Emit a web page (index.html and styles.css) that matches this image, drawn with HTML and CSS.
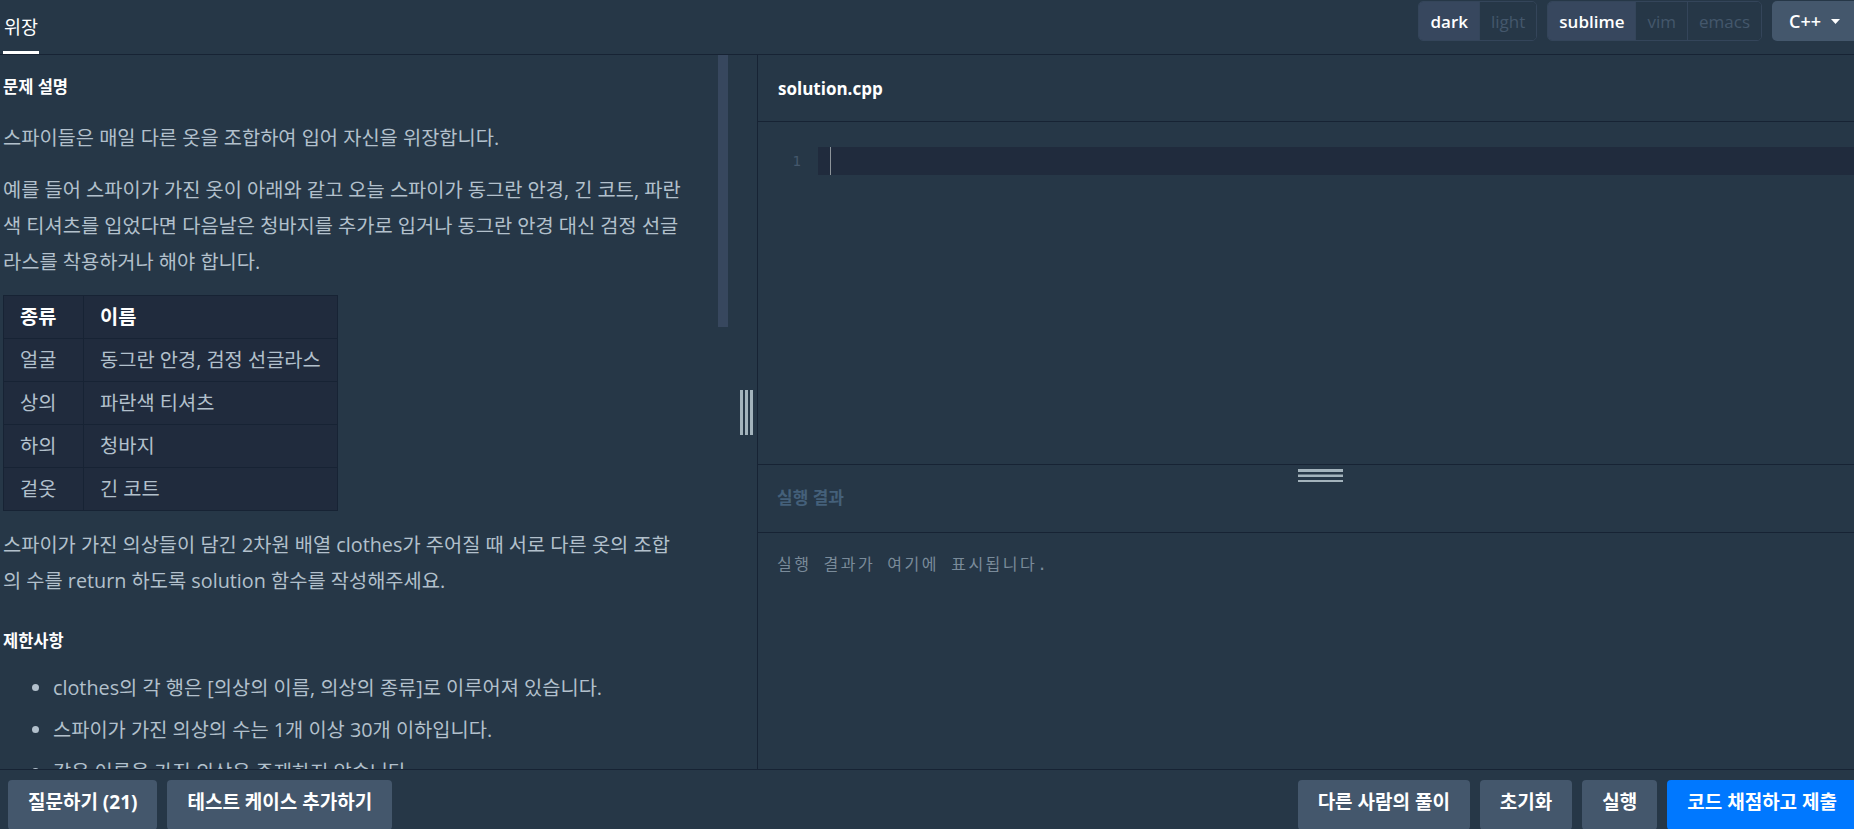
FILE: index.html
```html
<!DOCTYPE html>
<html lang="ko">
<head>
<meta charset="utf-8">
<title>위장</title>
<link rel="stylesheet" href="styles.css">
</head>
<body>
<div class="app">
  <header class="topbar">
    <nav class="tabs">
      <div class="tab">위장</div>
    </nav>
    <div class="toolbar">
      <div class="toggle-group">
        <span class="toggle on">dark</span>
        <span class="toggle">light</span>
      </div>
      <div class="toggle-group">
        <span class="toggle on">sublime</span>
        <span class="toggle">vim</span>
        <span class="toggle">emacs</span>
      </div>
      <div class="lang-btn">
        <span>C++</span>
        <svg class="caret" width="9" height="5" viewBox="0 0 9 5"><polygon points="0,0 9,0 4.5,5" fill="#ffffff"/></svg>
      </div>
    </div>
  </header>

  <main class="workspace">
    <section class="problem">
      <div class="problem-body">
        <h5 class="section-title">문제 설명</h5>
        <p>스파이들은 매일 다른 옷을 조합하여 입어 자신을 위장합니다.</p>
        <p class="before-table">예를 들어 스파이가 가진 옷이 아래와 같고 오늘 스파이가 동그란 안경, 긴 코트, 파란색 티셔츠를 입었다면 다음날은 청바지를 추가로 입거나 동그란 안경 대신 검정 선글라스를 착용하거나 해야 합니다.</p>
        <table class="info-table">
          <thead>
            <tr><th class="kind">종류</th><th>이름</th></tr>
          </thead>
          <tbody>
            <tr><td>얼굴</td><td>동그란 안경, 검정 선글라스</td></tr>
            <tr><td>상의</td><td>파란색 티셔츠</td></tr>
            <tr><td>하의</td><td>청바지</td></tr>
            <tr><td>겉옷</td><td>긴 코트</td></tr>
          </tbody>
        </table>
        <p>스파이가 가진 의상들이 담긴 2차원 배열 clothes가 주어질 때 서로 다른 옷의 조합의 수를 return 하도록 solution 함수를 작성해주세요.</p>
        <h5 class="section-title constraints">제한사항</h5>
        <ul class="rules">
          <li>clothes의 각 행은 [의상의 이름, 의상의 종류]로 이루어져 있습니다.</li>
          <li>스파이가 가진 의상의 수는 1개 이상 30개 이하입니다.</li>
          <li>같은 이름을 가진 의상은 존재하지 않습니다.</li>
          <li>clothes의 모든 원소는 문자열로 이루어져 있습니다.</li>
        </ul>
      </div>
      <div class="scroll-track"><div class="scroll-thumb"></div></div>
    </section>

    <div class="v-gutter">
      <svg width="13" height="45" viewBox="0 0 13 45">
        <rect x="0" y="0" width="3" height="45" fill="#a3b3bc"/>
        <rect x="5" y="0" width="3" height="45" fill="#a3b3bc"/>
        <rect x="10" y="0" width="3" height="45" fill="#a3b3bc"/>
      </svg>
    </div>

    <section class="ide">
      <div class="file-header">solution.cpp</div>
      <div class="editor">
        <div class="gutter"><div class="line-no">1</div></div>
        <div class="code">
          <div class="active-line"><span class="cursor"></span></div>
        </div>
      </div>
      <div class="output-pane">
        <svg class="h-handle" width="45" height="13" viewBox="0 0 45 13">
          <rect x="0" y="0" width="45" height="3" fill="#a3b3bc"/>
          <rect x="0" y="5.5" width="45" height="2.5" fill="#a3b3bc"/>
          <rect x="0" y="11" width="45" height="2" fill="#a3b3bc"/>
        </svg>
        <div class="output-header">실행 결과</div>
        <div class="output-body">실행 결과가 여기에 표시됩니다.</div>
      </div>
    </section>
  </main>

  <footer class="bottombar">
    <div class="btn-group">
      <span class="btn">질문하기 (21)</span>
      <span class="btn">테스트 케이스 추가하기</span>
    </div>
    <div class="btn-group">
      <span class="btn">다른 사람의 풀이</span>
      <span class="btn">초기화</span>
      <span class="btn">실행</span>
      <span class="btn primary">코드 채점하고 제출</span>
    </div>
  </footer>
</div>
</body>
</html>
```

FILE: styles.css
```css
* {
  box-sizing: border-box;
}

html,
body {
  margin: 0;
  height: 100%;
  overflow: hidden;
  background: #263747;
}

body {
  font-family: "Open Sans", "Noto Sans CJK KR", sans-serif;
  color: #b2c0cc;
}

.app {
  width: 1881px;
  height: 100vh;
  display: flex;
  flex-direction: column;
}

/* ---------- top bar ---------- */
.topbar {
  flex: none;
  height: 55px;
  display: flex;
  justify-content: space-between;
  border-bottom: 1px solid #172334;
  padding: 0 9px 0 3px;
}

.tabs {
  display: flex;
}

.tab {
  height: 54px;
  display: flex;
  align-items: center;
  padding: 0 1px;
  border-bottom: 3px solid #ffffff;
  font-size: 18.5px;
  color: #ffffff;
}

.toolbar {
  display: flex;
  align-items: flex-start;
  gap: 10px;
  padding-top: 1px;
}

.toggle-group {
  display: flex;
  height: 40px;
  border: 1px solid #34455a;
  border-radius: 5px;
  overflow: hidden;
}

.toggle {
  display: flex;
  align-items: center;
  padding: 0 11px;
  font-size: 17px;
  color: #44576c;
  background: #263747;
}

.toggle + .toggle {
  border-left: 1px solid #34455a;
}

.toggle.on {
  background: #37475e;
  color: #ffffff;
  font-weight: 600;
}

.lang-btn {
  width: 100px;
  height: 40px;
  display: flex;
  align-items: center;
  gap: 10px;
  padding: 0 17px;
  border-radius: 5px;
  background: #44576c;
  color: #ffffff;
  font-size: 18px;
  font-weight: 600;
}

/* ---------- workspace ---------- */
.workspace {
  flex: 1;
  min-height: 0;
  display: flex;
}

.problem {
  flex: none;
  width: 728px;
  display: flex;
}

.problem-body {
  flex: 1;
  overflow: hidden;
  padding: 0 36px 0 3px;
  font-size: 19.8px;
  line-height: 36px;
}

.section-title {
  margin: 20px 0 21px;
  font-size: 16.5px;
  line-height: 24px;
  font-weight: 700;
  color: #ffffff;
}

.section-title.constraints {
  margin: 30px 0 17px;
}

.problem-body p {
  margin: 0 0 16px;
}

.problem-body p.before-table {
  margin-bottom: 15px;
}

.info-table {
  border-collapse: collapse;
  background: #202b3d;
  margin: 0 0 16px;
}

.info-table th,
.info-table td {
  border: 1px solid #172334;
  padding: 0 16px;
  line-height: 42px;
  text-align: left;
  font-weight: 400;
  white-space: nowrap;
}

.info-table th {
  color: #ffffff;
  font-weight: 700;
}

.info-table th.kind {
  width: 80px;
}

.rules {
  margin: 0;
  padding-left: 50px;
}

.rules li {
  margin-bottom: 6px;
}

.scroll-track {
  flex: none;
  width: 10px;
}

.scroll-thumb {
  height: 272px;
  background: #37475e;
}

.v-gutter {
  flex: none;
  width: 29px;
  display: flex;
  align-items: center;
  padding-left: 12px;
}

.v-gutter svg {
  display: block;
}

/* ---------- ide ---------- */
.ide {
  flex: 1;
  min-width: 0;
  display: flex;
  flex-direction: column;
  border-left: 1px solid #172334;
}

.file-header {
  flex: none;
  height: 67px;
  display: flex;
  align-items: center;
  padding-left: 20px;
  border-bottom: 1px solid #172334;
  font-size: 17px;
  font-weight: 700;
  color: #ffffff;
}

.editor {
  flex: none;
  height: 342px;
  display: flex;
  padding-top: 25px;
}

.gutter {
  flex: none;
  width: 60px;
  padding-right: 17px;
  text-align: right;
  font-family: "DejaVu Sans Mono", monospace;
  font-size: 14px;
  line-height: 28px;
  color: #44576c;
}

.code {
  flex: 1;
}

.active-line {
  height: 28px;
  background: #202b3d;
  padding-left: 12px;
}

.cursor {
  display: block;
  width: 1px;
  height: 28px;
  background: #8d949a;
}

.output-pane {
  flex: 1;
  position: relative;
  display: flex;
  flex-direction: column;
  border-top: 1px solid #172334;
}

.h-handle {
  position: absolute;
  top: 4px;
  left: 50%;
  margin-left: -22px;
}

.output-header {
  flex: none;
  height: 68px;
  display: flex;
  align-items: center;
  padding: 0 19px 4px;
  border-bottom: 1px solid #172334;
  font-size: 17px;
  font-weight: 700;
  color: #44607a;
}

.output-body {
  flex: 1;
  padding: 20px 19px;
  font-family: "DejaVu Sans Mono", "Noto Sans CJK KR", monospace;
  font-size: 16px;
  line-height: 24px;
  letter-spacing: 2.5px;
  color: #7a8b9a;
}

/* ---------- bottom bar ---------- */
.bottombar {
  flex: none;
  height: 60px;
  display: flex;
  justify-content: space-between;
  align-items: flex-start;
  padding: 10px 24px 0 8px;
  border-top: 1px solid #172334;
  overflow: hidden;
}

.btn-group {
  display: flex;
  gap: 10px;
}

.btn {
  height: 50px;
  display: flex;
  align-items: center;
  padding: 0 20px 8px;
  border-radius: 4px;
  background: #44576c;
  color: #ffffff;
  font-size: 19px;
  font-weight: 700;
  white-space: nowrap;
}

.btn.primary {
  background: #0078ff;
}
```
